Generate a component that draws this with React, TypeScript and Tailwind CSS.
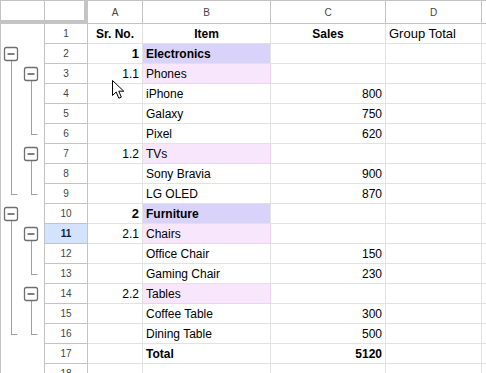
import React from "react";

type G = "box" | "line" | "end" | undefined;

interface Row {
  n: number;
  a?: string;
  aBold?: boolean;
  b?: string;
  bBold?: boolean;
  bTone?: "group" | "sub";
  c?: string;
  cBold?: boolean;
  g1?: G;
  g2?: G;
}

const rows: Row[] = [
  { n: 1 },
  { n: 2, a: "1", aBold: true, b: "Electronics", bBold: true, bTone: "group", g1: "box" },
  { n: 3, a: "1.1", b: "Phones", bTone: "sub", g1: "line", g2: "box" },
  { n: 4, b: "iPhone", c: "800", g1: "line", g2: "line" },
  { n: 5, b: "Galaxy", c: "750", g1: "line", g2: "line" },
  { n: 6, b: "Pixel", c: "620", g1: "line", g2: "end" },
  { n: 7, a: "1.2", b: "TVs", bTone: "sub", g1: "line", g2: "box" },
  { n: 8, b: "Sony Bravia", c: "900", g1: "line", g2: "line" },
  { n: 9, b: "LG OLED", c: "870", g1: "end", g2: "end" },
  { n: 10, a: "2", aBold: true, b: "Furniture", bBold: true, bTone: "group", g1: "box" },
  { n: 11, a: "2.1", b: "Chairs", bTone: "sub", g1: "line", g2: "box" },
  { n: 12, b: "Office Chair", c: "150", g1: "line", g2: "line" },
  { n: 13, b: "Gaming Chair", c: "230", g1: "line", g2: "end" },
  { n: 14, a: "2.2", b: "Tables", bTone: "sub", g1: "line", g2: "box" },
  { n: 15, b: "Coffee Table", c: "300", g1: "line", g2: "line" },
  { n: 16, b: "Dining Table", c: "500", g1: "end", g2: "end" },
  { n: 17, b: "Total", bBold: true, c: "5120", cBold: true },
  { n: 18 },
];

// one outline level: box / running line / closing tick
function Level({ x, kind }: { x: number; kind: G }) {
  if (!kind) return null;
  const lx = x + 7.5;
  if (kind === "box")
    return (
      <g>
        <line x1={lx} y1={17} x2={lx} y2={20} stroke="#a0a0a0" />
        <rect x={x + 0.5} y={3.5} width={13} height={13} rx={2} fill="#fff" stroke="#6f6f6f" strokeWidth={1.3} />
        <line x1={x + 3.5} y1={10} x2={x + 10.5} y2={10} stroke="#5f5f5f" strokeWidth={1.6} />
      </g>
    );
  if (kind === "line") return <line x1={lx} y1={0} x2={lx} y2={20} stroke="#a0a0a0" />;
  return (
    <g>
      <line x1={lx} y1={0} x2={lx} y2={11} stroke="#a0a0a0" />
      <line x1={lx} y1={10.5} x2={lx + 6} y2={10.5} stroke="#a0a0a0" />
    </g>
  );
}

function Cursor() {
  return (
    <svg width="14" height="20" viewBox="0 0 14 20" className="absolute left-[112px] top-[80px] pointer-events-none">
      <path
        d="M0.5 0.5 L0.5 15.5 L4.2 12 L6.8 18.2 L9.3 17.1 L6.8 11.2 L11.8 11.2 Z"
        fill="#fff"
        stroke="#000"
        strokeWidth={1}
        strokeLinejoin="round"
      />
    </svg>
  );
}

const cell = "h-[20px] border-b border-r border-[#e2e2e2] flex items-center px-[3px] overflow-hidden whitespace-nowrap";

export default function App() {
  return (
    <div className="relative w-[486px] h-[373px] overflow-hidden bg-white font-['Liberation_Sans',Arial,sans-serif] text-[12px] text-black">
      <div className="border-l border-t border-[#c4c4c4]">
        {/* column headers */}
        <div className="flex h-[23px]">
          <div className="w-[87px] flex flex-col shrink-0">
            <div className="flex h-[19px]">
              <div className="w-[44px] border-r border-[#c4c4c4]" />
              <div className="flex-1 border-r-4 border-[#c4c4c4]" />
            </div>
            <div className="h-[4px] bg-[#c4c4c4]" />
          </div>
          {[
            ["A", "w-[55px]"],
            ["B", "w-[128px]"],
            ["C", "w-[115px]"],
            ["D", "w-[96px]"],
          ].map(([l, w]) => (
            <div key={l} className={`${w} shrink-0 border-b border-r border-[#c4c4c4] flex items-center justify-center text-[10px] text-[#444]`}>
              {l}
            </div>
          ))}
          <div className="flex-1 border-b border-[#c4c4c4]" />
        </div>

        {rows.map((r) => {
          const sel = r.n === 11;
          const bTone =
            r.bTone === "group"
              ? "bg-[#d9d2fb] border-[#cbc2f3]"
              : r.bTone === "sub"
              ? "bg-[#f8e7fc] border-[#ecd3f2]"
              : "";
          return (
            <div key={r.n} className="flex h-[20px]">
              <div className="w-[44px] shrink-0 border-r border-[#c4c4c4]">
                <svg width="43" height="20" className="block">
                  <Level x={3} kind={r.g1} />
                  <Level x={23} kind={r.g2} />
                </svg>
              </div>
              <div
                className={`w-[43px] shrink-0 h-[20px] border-b border-r border-[#c4c4c4] flex items-center justify-center text-[10px] ${
                  sel ? "bg-[#d3e3fd] font-bold text-[#0b1f4a]" : "text-[#444]"
                }`}
              >
                {r.n}
              </div>
              {r.n === 1 ? (
                <>
                  <div className={`${cell} w-[55px] shrink-0 justify-center font-bold`}>Sr. No.</div>
                  <div className={`${cell} w-[128px] shrink-0 justify-center font-bold`}>Item</div>
                  <div className={`${cell} w-[115px] shrink-0 justify-center font-bold`}>Sales</div>
                  <div className={`${cell} w-[96px] shrink-0 text-[13px]`}>Group Total</div>
                </>
              ) : (
                <>
                  <div className={`${cell} w-[55px] shrink-0 justify-end ${r.aBold ? "font-bold text-[13px]" : ""}`}>{r.a}</div>
                  <div className={`${cell} w-[128px] shrink-0 ${bTone} ${r.bBold ? "font-bold" : ""}`}>{r.b}</div>
                  <div className={`${cell} w-[115px] shrink-0 justify-end ${r.cBold ? "font-bold" : ""}`}>{r.c}</div>
                  <div className={`${cell} w-[96px] shrink-0`} />
                </>
              )}
              <div className="flex-1 h-[20px] border-b border-[#e2e2e2]" />
            </div>
          );
        })}
      </div>
      <Cursor />
    </div>
  );
}
